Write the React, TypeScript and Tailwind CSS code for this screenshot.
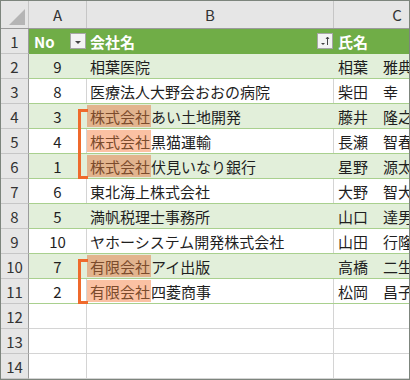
import { ReactNode } from 'react';

type Row = {
  no: number;
  prefix?: string;
  name: string;
  person: string;
};

const rows: Row[] = [
  { no: 9, name: '相葉医院', person: '相葉　雅典' },
  { no: 8, name: '医療法人大野会おおの病院', person: '柴田　幸' },
  { no: 3, prefix: '株式会社', name: 'あい土地開発', person: '藤井　隆之' },
  { no: 4, prefix: '株式会社', name: '黒猫運輸', person: '長瀬　智春' },
  { no: 1, prefix: '株式会社', name: '伏見いなり銀行', person: '星野　源太' },
  { no: 6, name: '東北海上株式会社', person: '大野　智大' },
  { no: 5, name: '満帆税理士事務所', person: '山口　達男' },
  { no: 10, name: 'ヤホーシステム開発株式会社', person: '山田　行隆' },
  { no: 7, prefix: '有限会社', name: 'アイ出版', person: '高橋　二生' },
  { no: 2, prefix: '有限会社', name: '四菱商事', person: '松岡　昌子' },
];

function RowHead({ children }: { children: ReactNode }) {
  return (
    <div className="w-[28px] shrink-0 h-full flex items-center justify-center bg-[#e6e6e6] border-r border-r-[#9b9b9b] border-b border-b-[#c6c6c6] text-[#333] text-[15px]">
      {children}
    </div>
  );
}

function FilterButton({ sorted }: { sorted?: boolean }) {
  return (
    <div className="w-[16px] h-[16px] bg-[#f3f3f3] border border-[#a6a6a6] flex items-end justify-center shrink-0">
      {sorted ? (
        <svg width="14" height="14" viewBox="0 0 14 14">
          <path d="M3 9h4l-2 2z" fill="#444" />
          <path d="M9.5 3v8M8 5l1.5-2 1.5 2" stroke="#444" strokeWidth="1" fill="none" />
        </svg>
      ) : (
        <svg width="14" height="14" viewBox="0 0 14 14">
          <path d="M4 7h6l-3 3z" fill="#444" />
        </svg>
      )}
    </div>
  );
}

function Bracket({ top, height }: { top: number; height: number }) {
  return (
    <div
      className="absolute left-[77px] w-[10px] border-l-[3px] border-t-[3px] border-b-[3px] border-[#ef6a2c]"
      style={{ top, height }}
    />
  );
}

export default function App() {
  return (
    <div className="relative w-[410px] h-[380px] overflow-hidden border border-[#7d857d] bg-white font-['Noto_Sans_CJK_JP',sans-serif] leading-none">
      {/* column letters */}
      <div className="flex h-[28px] bg-[#e6e6e6] border-b border-[#9b9b9b] text-[#333] text-[15px]">
        <div className="w-[28px] shrink-0 border-r border-[#c6c6c6] flex items-end justify-end p-[2px]">
          <svg width="18" height="17" viewBox="0 0 18 17">
            <path d="M17 0v16H1z" fill="#b5b5b5" />
          </svg>
        </div>
        <div className="w-[58px] shrink-0 border-r border-[#c6c6c6] flex items-center justify-center">A</div>
        <div className="w-[247px] shrink-0 border-r border-[#c6c6c6] flex items-center justify-center">B</div>
        <div className="w-[126px] shrink-0 flex items-center justify-center">C</div>
      </div>

      {/* table header */}
      <div className="flex h-[25px]">
        <RowHead>1</RowHead>
        <div className="flex w-[431px] bg-[#70ad47] text-white font-bold text-[15px] border-b border-[#70ad47]">
          <div className="w-[58px] shrink-0 flex items-center justify-between pl-[5px] pr-[1px]">
            <span>No</span>
            <FilterButton />
          </div>
          <div className="w-[247px] shrink-0 flex items-center justify-between pl-[3px] pr-[1px]">
            <span>会社名</span>
            <FilterButton sorted />
          </div>
          <div className="w-[126px] shrink-0 flex items-center pl-[4px]">氏名</div>
        </div>
      </div>

      {rows.map((r, i) => {
        const green = i % 2 === 0;
        const line = green ? 'border-r-[#e2efda]' : 'border-r-[#d4d4d4]';
        return (
          <div key={i} className="flex h-[25px]">
            <RowHead>{i + 2}</RowHead>
            <div
              className={`flex w-[431px] text-[15px] text-[#1f1f1f] border-b border-b-[#a9d08e] ${
                green ? 'bg-[#e2efda]' : 'bg-white'
              }`}
            >
              <div className={`w-[58px] shrink-0 flex items-center justify-center border-r ${line}`}>{r.no}</div>
              <div className={`w-[247px] shrink-0 flex items-center whitespace-nowrap border-r ${line}`}>
                {r.prefix ? (
                  <span
                    className={`inline-flex items-center h-[22px] pl-[3px] pr-[1px] text-[#7b4b2c] ${
                      green ? 'bg-[#e2b48e]' : 'bg-[#fbc1a3]'
                    }`}
                  >
                    {r.prefix}
                  </span>
                ) : (
                  <span className="pl-[3px]" />
                )}
                <span>{r.name}</span>
              </div>
              <div className="w-[126px] shrink-0 flex items-center pl-[4px] whitespace-nowrap">{r.person}</div>
            </div>
          </div>
        );
      })}

      {[12, 13, 14].map((n) => (
        <div key={n} className="flex h-[25px]">
          <RowHead>{n}</RowHead>
          <div className="flex w-[431px] border-b border-b-[#d4d4d4]">
            <div className="w-[58px] shrink-0 border-r border-r-[#d4d4d4]" />
            <div className="w-[247px] shrink-0 border-r border-r-[#d4d4d4]" />
            <div className="w-[126px] shrink-0" />
          </div>
        </div>
      ))}

      <Bracket top={108} height={70} />
      <Bracket top={258} height={45} />
    </div>
  );
}
